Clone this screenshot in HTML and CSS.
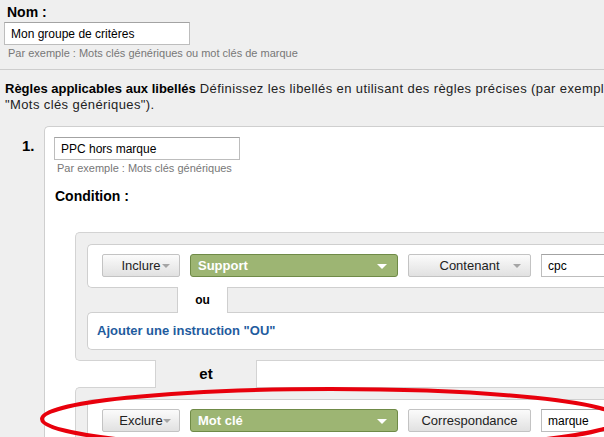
FILE: index.html
```html
<!DOCTYPE html>
<html lang="fr">
<head>
    <meta charset="UTF-8">
    <meta name="viewport" content="width=device-width, initial-scale=1.0">
    <title>Groupe de critères</title>
    <link rel="stylesheet" href="styles.css">
</head>
<body>
    <div class="page">
        <section class="name-field">
            <label class="field-label" for="groupName">Nom :</label>
            <input type="text" class="text-input name-input" id="groupName" value="Mon groupe de critères">
            <div class="hint">Par exemple : Mots clés génériques ou mot clés de marque</div>
        </section>

        <hr class="divider">

        <p class="rules-intro"><strong>Règles applicables aux libellés</strong> Définissez les libellés en utilisant des règles précises (par exemple<br>"Mots clés génériques").</p>

        <div class="rule">
            <div class="rule-num">1.</div>
            <div class="rule-box">
                <input type="text" class="text-input label-input" value="PPC hors marque">
                <div class="hint">Par exemple : Mots clés génériques</div>
                <div class="condition-title">Condition :</div>

                <div class="condition-group">
                    <div class="clause">
                        <button class="btn btn-select btn-mode">Inclure<span class="caret"></span></button>
                        <button class="btn btn-field">Support<span class="caret"></span></button>
                        <button class="btn btn-select btn-op">Contenant<span class="caret"></span></button>
                        <input type="text" class="text-input value-input" value="cpc">
                    </div>
                    <div class="or-sep"><span class="or-cell">ou</span></div>
                    <div class="add-or"><a href="#">Ajouter une instruction "OU"</a></div>
                </div>

                <div class="and-sep"><span class="and-cell">et</span></div>

                <div class="condition-group">
                    <div class="clause">
                        <button class="btn btn-select btn-mode">Exclure<span class="caret caret-tight"></span></button>
                        <button class="btn btn-field">Mot clé<span class="caret"></span></button>
                        <button class="btn btn-select btn-op">Correspondance</button>
                        <input type="text" class="text-input value-input" value="marque">
                    </div>
                </div>
            </div>
        </div>
    </div>

    <svg class="highlight" width="604" height="437" viewBox="0 0 604 437">
        <ellipse cx="331" cy="419" rx="289" ry="30" fill="none" stroke="#e8000c" stroke-width="4"/>
    </svg>
</body>
</html>
```

FILE: styles.css
```css
body {
    margin: 0;
    background: #efefef;
    font-family: "Liberation Sans", Arial, sans-serif;
    color: #111;
    overflow: hidden;
}

.page {
    width: 900px;
}

.name-field {
    padding: 4px 4px 0;
}

.field-label {
    display: block;
    padding-left: 3px;
    font-size: 14px;
    line-height: 16px;
    font-weight: bold;
    color: #000;
}

.text-input {
    display: block;
    box-sizing: border-box;
    height: 23px;
    padding: 0 6px;
    border: 1px solid #bdbdbd;
    border-top-color: #a3a3a3;
    border-radius: 0;
    background: #fff;
    font-family: inherit;
    font-size: 12px;
    color: #000;
}

.name-input {
    margin-top: 2px;
    width: 186px;
}

.hint {
    margin-top: 2px;
    padding-left: 4px;
    font-size: 11px;
    line-height: 13px;
    color: #777;
}

.divider {
    margin: 9px 0 0;
    border: 0;
    border-top: 1px solid #cdcdcd;
}

.rules-intro {
    margin: 11px 0 0;
    padding-left: 5px;
    font-size: 13px;
    line-height: 16px;
    letter-spacing: 0.4px;
    color: #222;
    white-space: nowrap;
}

.rules-intro strong {
    letter-spacing: 0;
    color: #000;
}

.rule {
    display: flex;
    margin-top: 13px;
}

.rule-num {
    width: 44px;
    box-sizing: border-box;
    padding: 11px 0 0 22px;
    font-size: 15px;
    line-height: 18px;
    font-weight: bold;
    color: #000;
}

.rule-box {
    flex: 1;
    padding: 10px 0 40px 9px;
    background: #fff;
    border: 1px solid #cfcfcf;
    border-right: none;
    border-radius: 5px 0 0 0;
}

.label-input {
    width: 186px;
}

.rule-box .hint {
    padding-left: 3px;
}

.condition-title {
    margin-top: 13px;
    padding-left: 1px;
    font-size: 14px;
    line-height: 16px;
    font-weight: bold;
    color: #000;
}

.condition-group {
    margin: 28px 0 0 21px;
    padding: 11px 0 10px 11px;
    background: #efefef;
    border: 1px solid #d3d3d3;
    border-right: none;
    border-radius: 5px 0 0 5px;
}

.and-sep + .condition-group {
    margin-top: 0;
}

.clause {
    display: flex;
    gap: 10px;
    align-items: center;
    padding: 9px 0 10px 14px;
    background: #fff;
    border: 1px solid #cfcfcf;
    border-right: none;
    border-radius: 5px 0 0 5px;
}

.btn {
    position: relative;
    box-sizing: border-box;
    height: 23px;
    padding: 0;
    border: 1px solid #c3c3c3;
    border-radius: 2px;
    background: linear-gradient(#fbfbfb, #e1e1e1);
    font-family: inherit;
    font-size: 13px;
    line-height: 21px;
    color: #222;
    text-align: center;
}

.btn-mode {
    width: 78px;
}

.btn-op {
    width: 123px;
}

.btn-field {
    width: 208px;
    padding-left: 7px;
    border-color: #6f8a47;
    border-radius: 3px;
    background: #9db573;
    color: #fff;
    font-weight: bold;
    text-align: left;
}

.caret {
    position: absolute;
    top: 9px;
    right: 9px;
    border-left: 4px solid transparent;
    border-right: 4px solid transparent;
    border-top: 4px solid #a5a5a5;
}

.caret-tight {
    right: 8px;
}

.btn-field .caret {
    right: 10px;
    border-left-width: 5px;
    border-right-width: 5px;
    border-top: 5px solid #fff;
}

.value-input {
    width: 140px;
}

.or-sep,
.and-sep {
    position: relative;
    display: flex;
}

.or-sep {
    height: 26px;
    margin: -1px 0;
}

.or-cell {
    box-sizing: border-box;
    width: 51px;
    margin-left: 90px;
    background: #fff;
    border-left: 1px solid #cfcfcf;
    border-right: 1px solid #cfcfcf;
    font-size: 12px;
    line-height: 26px;
    font-weight: bold;
    text-align: center;
    color: #000;
}

.add-or {
    box-sizing: border-box;
    height: 38px;
    padding-left: 9px;
    background: #fff;
    border: 1px solid #cfcfcf;
    border-right: none;
    border-radius: 5px 0 0 5px;
    font-size: 13px;
    line-height: 36px;
}

.add-or a {
    color: #1f5c9e;
    font-weight: bold;
    text-decoration: none;
}

.and-sep {
    height: 28px;
    margin: -1px 0;
}

.and-cell {
    box-sizing: border-box;
    width: 102px;
    margin-left: 101px;
    background: #efefef;
    border-left: 1px solid #d3d3d3;
    border-right: 1px solid #d3d3d3;
    font-size: 15px;
    line-height: 28px;
    font-weight: bold;
    text-align: center;
    color: #000;
}

.highlight {
    position: absolute;
    top: 0;
    left: 0;
    pointer-events: none;
}
```
